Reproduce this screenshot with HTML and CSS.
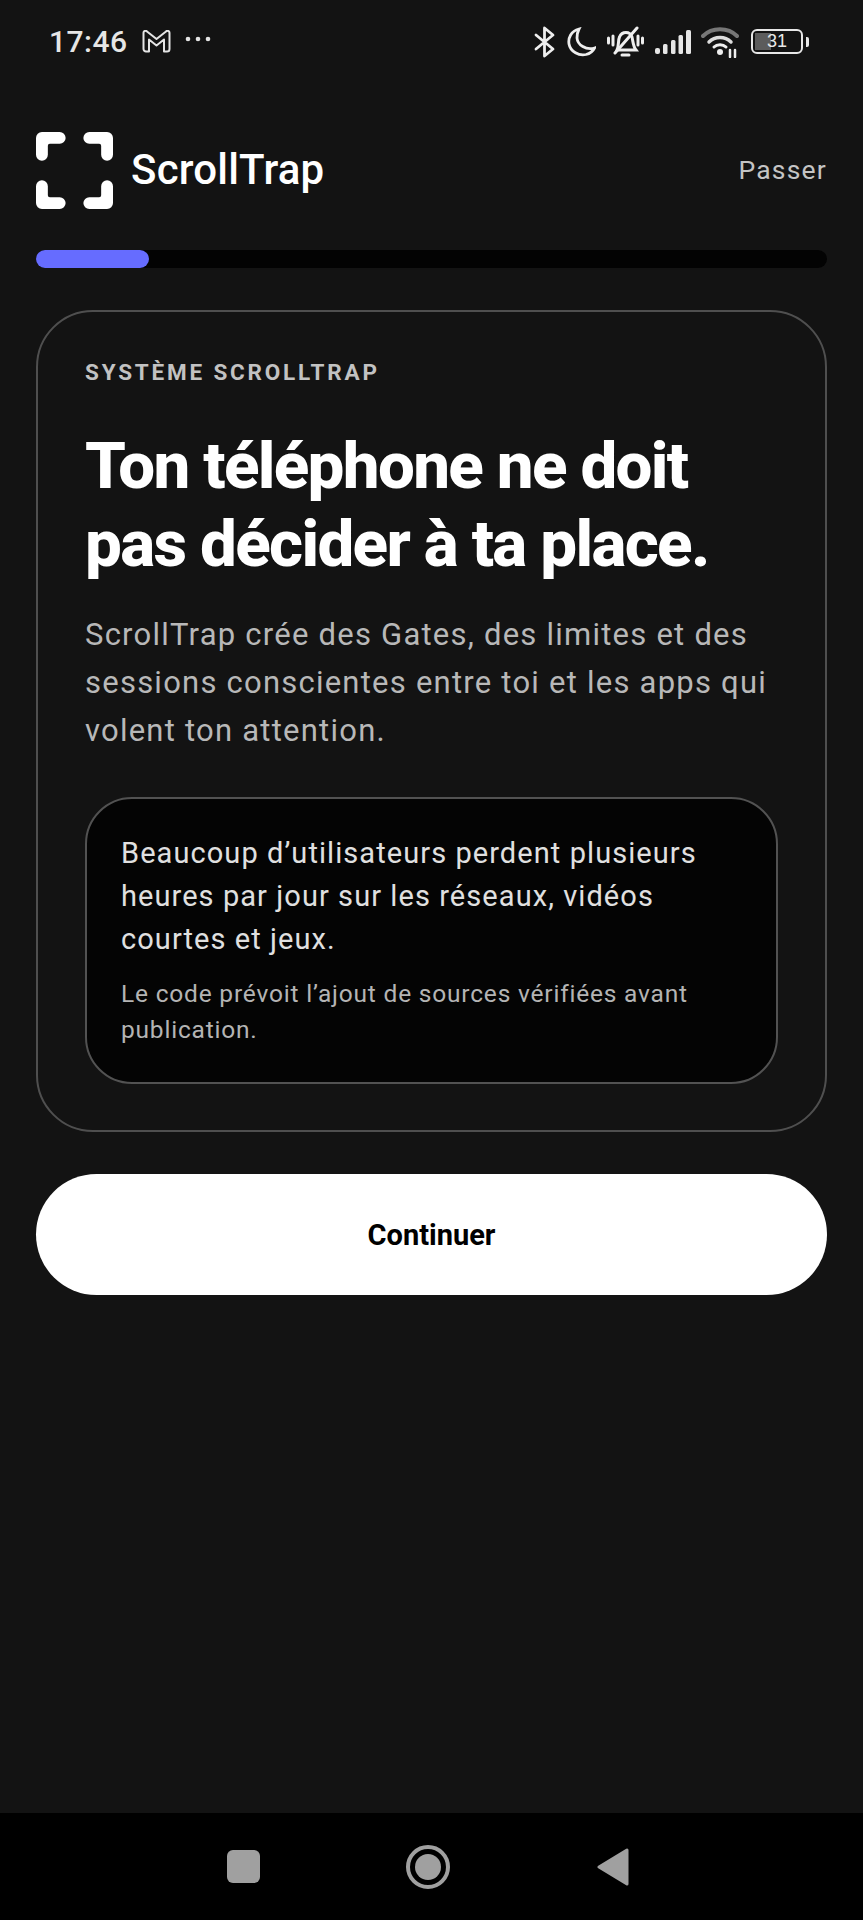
FILE: index.html
```html
<!DOCTYPE html>
<html lang="fr">
<head>
  <meta charset="UTF-8">
  <meta name="viewport" content="width=device-width, initial-scale=1.0">
  <title>ScrollTrap</title>
  <link rel="stylesheet" href="styles.css">
</head>
<body>
  <!-- Status bar -->
  <div class="status-bar">
    <div class="status-left">
      <span class="time">17:46</span>
      <svg class="icon-gmail" width="29" height="23" viewBox="0 0 29 23" fill="none" stroke="#e4e4e4" stroke-width="2" stroke-linejoin="round">
        <path d="M1.500 3 A2 2 0 0 1 5 1.500 L14.500 9 L24 1.500 A2 2 0 0 1 27.500 3 V19 A2.500 2.500 0 0 1 25 21.500 H22 V9.500 L14.500 15.500 L7 9.500 V21.500 H4 A2.500 2.500 0 0 1 1.500 19 Z"/>
      </svg>
      <svg class="icon-dots" width="26" height="6" viewBox="0 0 26 6" fill="#e4e4e4">
        <circle cx="3" cy="3" r="2.300"/><circle cx="13" cy="3" r="2.300"/><circle cx="23" cy="3" r="2.300"/>
      </svg>
    </div>
    <div class="status-right">
      <svg width="22" height="32" viewBox="0 0 22 32" fill="none" stroke="#eee" stroke-width="2.800" stroke-linejoin="round" stroke-linecap="round">
        <path d="M2 9 L19 23 L10.500 30 V2 L19 9 L2 23"/>
      </svg>
      <svg width="29" height="30" viewBox="0 0 29 30" fill="none" stroke="#eee" stroke-width="2.800">
        <path d="M12 2 C4 4 1 11 2 17 C3.500 25 12 29 19 27.500 C23 26.500 26 24 27.500 21 C19 23.500 10.500 18 10 11 C10 8 10.500 5 12 2 Z"/>
      </svg>
      <svg width="37" height="32" viewBox="0 0 37 32" fill="none" stroke="#eee" stroke-width="3" stroke-linecap="round">
        <path d="M10 24 C12 20 11 14 12.500 11 C15 5 23 5 25 11 C26 15 26 20 29 24 Z"/>
        <path d="M15 29 H22"/>
        <path d="M8 27 L30 2"/>
        <path d="M6 10 V19 M1.500 12 V17 M31 10 V19 M35.500 12 V17"/>
      </svg>
      <svg class="icon-signal" width="36" height="24" viewBox="0 0 36 24" fill="#e6e6e6">
        <rect x="0" y="18" width="5" height="6" rx="2"/>
        <rect x="8" y="14" width="4.500" height="10" rx="1.500"/>
        <rect x="16" y="10" width="4.500" height="14" rx="1.500"/>
        <rect x="23.500" y="5" width="4.500" height="19" rx="1.500"/>
        <rect x="31" y="0" width="5" height="24" rx="1.500"/>
      </svg>
      <svg width="38" height="32" viewBox="0 0 38 32" fill="none" stroke-linecap="round">
        <path d="M2 10 C11 1 27 1 36 10" stroke="#777" stroke-width="4"/>
        <path d="M8 16 C14 10 24 10 30 16" stroke="#ddd" stroke-width="3.500"/>
        <path d="M13 21 C16 18 22 18 25 21" stroke="#eee" stroke-width="3"/>
        <circle cx="19" cy="26" r="3" fill="#eee"/>
        <path d="M29 24 V31 M34 24 V31" stroke="#eee" stroke-width="2.500"/>
      </svg>
      <div class="battery">
        <div class="battery-body">
          <div class="battery-level"></div>
          <span class="battery-text">31</span>
        </div>
        <div class="battery-tip"></div>
      </div>
    </div>
  </div>

  <main class="screen">
    <div class="top-row">
      <div class="brand">
        <svg class="brand-logo" width="77" height="77" viewBox="0 0 78 78" fill="#fff">
          <path d="M6 0 H24 A6 6 0 0 1 24 12 H14 A2 2 0 0 0 12 14 V23 A6 6 0 0 1 0 23 V6 A6 6 0 0 1 6 0 Z"/>
          <path d="M72 0 H54 A6 6 0 0 0 54 12 H64 A2 2 0 0 1 66 14 V23 A6 6 0 0 0 78 23 V6 A6 6 0 0 0 72 0 Z"/>
          <path d="M6 78 H24 A6 6 0 0 0 24 66 H14 A2 2 0 0 1 12 64 V55 A6 6 0 0 0 0 55 V72 A6 6 0 0 0 6 78 Z"/>
          <path d="M72 78 H54 A6 6 0 0 1 54 66 H64 A2 2 0 0 0 66 64 V55 A6 6 0 0 1 78 55 V72 A6 6 0 0 1 72 78 Z"/>
        </svg>
        <span class="brand-name">ScrollTrap</span>
      </div>
      <a class="skip">Passer</a>
    </div>

    <div class="progress"><div class="progress-fill"></div></div>

    <section class="card">
      <p class="eyebrow">SYSTÈME SCROLLTRAP</p>
      <h1 class="title">Ton téléphone ne doit pas décider à ta place.</h1>
      <p class="intro">ScrollTrap crée des Gates, des limites et des sessions conscientes entre toi et les apps qui volent ton attention.</p>
      <div class="note">
        <p class="note-main">Beaucoup d’utilisateurs perdent plusieurs heures par jour sur les réseaux, vidéos courtes et jeux.</p>
        <p class="note-small">Le code prévoit l’ajout de sources vérifiées avant publication.</p>
      </div>
    </section>

    <button class="continue">Continuer</button>
  </main>

  <!-- Android nav bar -->
  <nav class="nav-bar">
    <div class="nav-square"></div>
    <div class="nav-home"><div class="nav-home-dot"></div></div>
    <svg width="32" height="38" viewBox="0 0 32 38" fill="#a0a0a0" stroke="#a0a0a0" stroke-width="3" stroke-linejoin="round">
      <path d="M30 2 V36 L2 19 Z"/>
    </svg>
  </nav>
</body>
</html>
```

FILE: styles.css
```css
* {
  box-sizing: border-box;
}
body {
  margin: 0;
  width: 863px;
  height: 1920px;
  display: flex;
  flex-direction: column;
  font-family: Roboto, Arial, sans-serif;
  background-color: #131313;
  color: #fff;
}
p, h1 {
  margin: 0;
}

.status-bar {
  height: 83px;
  padding: 0 54px 0 49px;
  display: flex;
  align-items: center;
  justify-content: space-between;
}
.status-left {
  display: flex;
  align-items: center;
}
.time {
  font-size: 30px;
  font-weight: 500;
  color: #e6e6e6;
  letter-spacing: 0.5px;
}
.icon-gmail {
  margin-left: 14px;
}
.icon-dots {
  margin-left: 14px;
  margin-top: -5px;
}
.status-right {
  display: flex;
  align-items: center;
  gap: 11px;
}
.icon-signal {
  margin-right: -1px;
}
.battery {
  display: flex;
  align-items: center;
  gap: 3px;
  margin-left: 1px;
}
.battery-body {
  position: relative;
  width: 52px;
  height: 25px;
  border: 2.5px solid #e8e8e8;
  border-radius: 6px;
  overflow: hidden;
  display: flex;
  align-items: center;
  justify-content: center;
}
.battery-level {
  position: absolute;
  left: 2px;
  top: 2px;
  bottom: 2px;
  width: 16px;
  background-color: #5c5c5c;
}
.battery-text {
  position: relative;
  font-size: 18px;
  color: #e8e8e8;
  font-family: "Liberation Sans", Arial, sans-serif;
}
.battery-tip {
  width: 3px;
  height: 10px;
  background-color: #e8e8e8;
  border-radius: 0 2px 2px 0;
}

.screen {
  flex: 1;
  padding: 49px 36px 0;
}
.top-row {
  display: flex;
  align-items: center;
  justify-content: space-between;
}
.brand {
  display: flex;
  align-items: center;
  gap: 18px;
}
.brand-name {
  font-size: 42px;
  font-weight: 500;
  letter-spacing: 0.2px;
  margin-bottom: 2px;
}
.skip {
  font-size: 26.500px;
  letter-spacing: 1.200px;
  color: #c4c4c4;
  margin-bottom: 2px;
}

.progress {
  margin-top: 41px;
  height: 18px;
  background-color: #030303;
  border-radius: 9px;
}
.progress-fill {
  width: 113px;
  height: 100%;
  background-color: #666cff;
  border-radius: 9px;
}

.card {
  margin-top: 42px;
  height: 822px;
  padding: 46px 47px;
  border: 2.500px solid #4f4f4f;
  border-radius: 57px;
}
.eyebrow {
  font-size: 22.500px;
  font-weight: 700;
  letter-spacing: 2.800px;
  line-height: 28px;
  color: #c2c2c2;
}
.title {
  margin-top: 41px;
  font-size: 65.500px;
  font-weight: 800;
  line-height: 78px;
  letter-spacing: -1.680px;
}
.intro {
  margin-top: 28px;
  font-size: 31px;
  line-height: 48px;
  letter-spacing: 1.230px;
  color: #b8b8b8;
}
.note {
  margin-top: 42px;
  height: 287px;
  padding: 33px 34px;
  background-color: #040404;
  border: 2.500px solid #525252;
  border-radius: 47px;
}
.note-main {
  font-size: 29px;
  line-height: 43px;
  letter-spacing: 1.070px;
  color: #e0e0e0;
}
.note-small {
  margin-top: 15px;
  font-size: 24.500px;
  line-height: 36px;
  letter-spacing: 0.800px;
  color: #b4b4b4;
}

.continue {
  display: block;
  width: 100%;
  height: 121px;
  margin-top: 42px;
  border: none;
  border-radius: 61px;
  background-color: #fff;
  color: #000;
  font-family: inherit;
  font-size: 29px;
  font-weight: 700;
}

.nav-bar {
  height: 107px;
  background-color: #000;
  display: flex;
  align-items: center;
  padding: 0 0 0 227px;
}
.nav-square {
  width: 33px;
  height: 33px;
  background-color: #a0a0a0;
  border-radius: 6px;
}
.nav-home {
  width: 44px;
  height: 44px;
  margin-left: 146px;
  margin-right: 147px;
  border: 4px solid #a0a0a0;
  border-radius: 50%;
  display: flex;
  align-items: center;
  justify-content: center;
}
.nav-home-dot {
  width: 26px;
  height: 26px;
  background-color: #a0a0a0;
  border-radius: 50%;
}
```
